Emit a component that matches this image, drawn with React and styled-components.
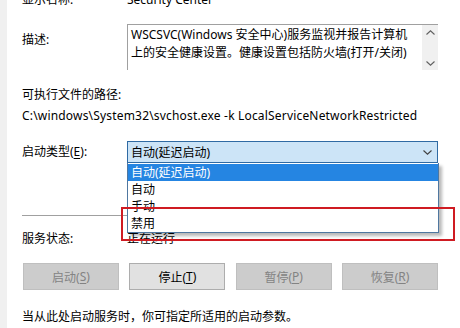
import styled, { createGlobalStyle } from 'styled-components';

const GlobalStyle = createGlobalStyle`
  html, body {
    margin: 0;
    padding: 0;
    background: #ffffff;
  }
  body {
    font-family: "Noto Sans", "Noto Sans CJK SC", sans-serif;
    font-size: 12px;
    color: #000000;
  }
`;

const Window = styled.div`
  position: relative;
  width: 460px;
  height: 328px;
  overflow: hidden;
  background: #ffffff;
  border-left: 7px solid #f0f0f0;
  box-sizing: border-box;
`;

const Content = styled.div`
  display: flex;
  flex-direction: column;
  padding: 0 22px 0 15px;
`;

const FieldRow = styled.div`
  display: grid;
  grid-template-columns: 105px 311px;
  align-items: ${(p) => p.$align || 'center'};
  margin-top: ${(p) => p.$gap || 0}px;
`;

const Label = styled.div`
  line-height: 18px;
  padding-top: ${(p) => p.$pad || 0}px;
  white-space: nowrap;
`;

const Value = styled.div`
  line-height: 18px;
  white-space: nowrap;
`;

const DescBox = styled.div`
  display: flex;
  height: 46px;
  box-sizing: border-box;
  border-top: 1px solid #a0a0a0;
  border-left: 1px solid #a0a0a0;
`;

const DescText = styled.div`
  flex: 1;
  padding: 1px 0 0 3px;
  line-height: 18px;
  white-space: nowrap;
  overflow: hidden;
`;

const ScrollBar = styled.div`
  width: 16px;
  background: #f0f0f0;
  display: flex;
  flex-direction: column;
  justify-content: space-between;
  align-items: center;
  padding: 5px 0 4px;
`;

const Caption = styled.div`
  line-height: 18px;
  margin-top: ${(p) => p.$gap || 0}px;
  letter-spacing: ${(p) => p.$spacing || 0}px;
  white-space: nowrap;
`;

const ComboWrap = styled.div`
  position: relative;
`;

const Combo = styled.div`
  height: 22px;
  box-sizing: border-box;
  border: 1px solid #2f6aa3;
  background: #cce4f7;
  display: flex;
  align-items: center;
  justify-content: space-between;
  padding: 0 5px 0 3px;
`;

const DropList = styled.div`
  position: absolute;
  top: 22px;
  left: 0;
  width: 312px;
  box-sizing: border-box;
  border: 1px solid #4f77a0;
  border-top: none;
  background: #ffffff;
  box-shadow: 3px 3px 3px rgba(0, 0, 0, 0.28);
  padding-top: 1px;
  z-index: 2;
`;

const Option = styled.div`
  height: 17px;
  line-height: 17px;
  padding-left: 3px;
  background: ${(p) => (p.$selected ? '#2585e2' : 'transparent')};
  color: ${(p) => (p.$selected ? '#ffffff' : '#000000')};
`;

const Separator = styled.div`
  height: 1px;
  background: #a0a0a0;
  margin-top: ${(p) => p.$gap || 0}px;
`;

const ButtonRow = styled.div`
  display: grid;
  grid-template-columns: repeat(4, 96px);
  justify-content: space-between;
  margin-top: 15px;
  padding-left: 1px;
`;

const Button = styled.div`
  height: 27px;
  box-sizing: border-box;
  display: flex;
  align-items: center;
  justify-content: center;
  border: 1px solid ${(p) => (p.$disabled ? '#bfbfbf' : '#adadad')};
  background: ${(p) => (p.$disabled ? '#cccccc' : '#e1e1e1')};
  color: ${(p) => (p.$disabled ? '#838383' : '#000000')};
`;

const Key = styled.span`
  text-decoration: underline;
  text-underline-offset: 2px;
`;

const Annotation = styled.div`
  position: absolute;
  left: 114px;
  top: 207px;
  width: 334px;
  height: 34px;
  box-sizing: border-box;
  border: 2px solid #cf1b22;
  z-index: 3;
  pointer-events: none;
`;

const Chevron = ({ up, color = '#505050' }) => (
  <svg width="9" height="5" viewBox="0 0 9 5">
    <path
      d={up ? 'M0.5 4.5 L4.5 0.8 L8.5 4.5' : 'M0.5 0.5 L4.5 4.2 L8.5 0.5'}
      fill="none"
      stroke={color}
      strokeWidth="1.1"
    />
  </svg>
);

const App = () => (
  <>
    <GlobalStyle />
    <Window>
      <Content>
        <FieldRow style={{ marginTop: -9 }}>
          <Label>显示名称:</Label>
          <Value>Security Center</Value>
        </FieldRow>
        <FieldRow $gap={15} $align="start">
          <Label $pad={7}>描述:</Label>
          <DescBox>
            <DescText>
              WSCSVC(Windows 安全中心)服务监视并报告计算机
              <br />
              上的安全健康设置。健康设置包括防火墙(打开/关闭)
            </DescText>
            <ScrollBar>
              <Chevron up color="#606060" />
              <Chevron color="#606060" />
            </ScrollBar>
          </DescBox>
        </FieldRow>
        <Caption $gap={16}>可执行文件的路径:</Caption>
        <Caption $gap={3} $spacing={0.18}>
          C:\windows\System32\svchost.exe -k LocalServiceNetworkRestricted
        </Caption>
        <FieldRow $gap={16}>
          <Label>
            启动类型(<Key>E</Key>):
          </Label>
          <ComboWrap>
            <Combo>
              <span>自动(延迟启动)</span>
              <Chevron color="#404040" />
            </Combo>
            <DropList>
              <Option $selected>自动(延迟启动)</Option>
              <Option>自动</Option>
              <Option>手动</Option>
              <Option>禁用</Option>
            </DropList>
          </ComboWrap>
        </FieldRow>
        <Separator $gap={52} />
        <FieldRow $gap={14}>
          <Label>服务状态:</Label>
          <Value>正在运行</Value>
        </FieldRow>
        <ButtonRow>
          <Button $disabled>
            启动(<Key>S</Key>)
          </Button>
          <Button>
            停止(<Key>T</Key>)
          </Button>
          <Button $disabled>
            暂停(<Key>P</Key>)
          </Button>
          <Button $disabled>
            恢复(<Key>R</Key>)
          </Button>
        </ButtonRow>
        <Caption $gap={18}>当从此处启动服务时，你可指定所适用的启动参数。</Caption>
      </Content>
      <Annotation />
    </Window>
  </>
);

export default App;
